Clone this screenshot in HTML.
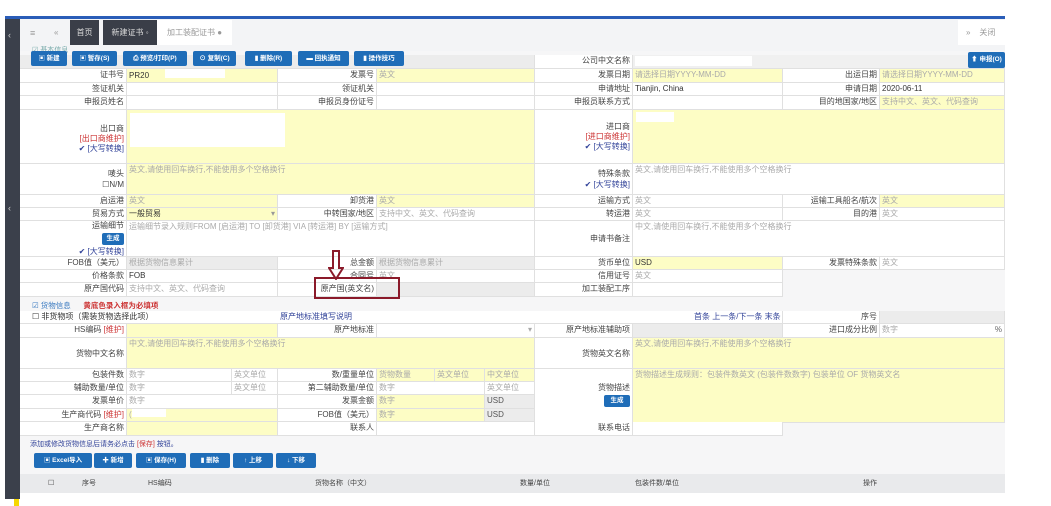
<!DOCTYPE html>
<html><head><meta charset="utf-8"><style>
*{margin:0;padding:0;box-sizing:border-box}
body{width:1051px;height:506px;background:#fff;position:relative;overflow:hidden;font-family:"Liberation Sans","Noto Sans CJK SC",sans-serif;font-size:8px;color:#333}
div{position:absolute}
.c{border-right:1px solid #e0e0e0;border-bottom:1px solid #e0e0e0;line-height:12px;padding:0 2px;white-space:nowrap;overflow:hidden}
.l{background:#fff;text-align:right;color:#444}
.y{background:#fdfdc5;color:#aaa}
.w{background:#fff;color:#aaa}
.g{background:#ececec;color:#aaa}
.k{color:#333}
.b{background:#1f6db8;color:#fff;border-radius:2px;font-size:6.5px;line-height:15px;height:15px;text-align:center;font-weight:bold}
.r{color:#c33}.u{color:#33449a}
</style></head><body>
<div style="left:5px;top:16px;width:1000px;height:3px;background:#2a5db8"></div>
<div style="left:5px;top:19px;width:15px;height:480px;background:#3b404b"></div>
<div style="left:8px;top:30px;color:#ccc;font-size:9px">‹</div>
<div style="left:8px;top:203px;color:#ccc;font-size:9px">‹</div>
<div style="left:20px;top:19px;width:985px;height:32px;background:#f3f4f6"></div>
<div style="left:30px;top:28px;color:#999;font-size:9px">≡</div>
<div style="left:54px;top:28px;color:#999;font-size:8px">«</div>
<div style="left:70px;top:20px;width:29px;height:25px;background:#3a3e48;color:#ddd;line-height:25px;text-align:center">首页</div>
<div style="left:103px;top:20px;width:54px;height:25px;background:#3a3e48;color:#ddd;line-height:25px;text-align:center">新建证书 ◦</div>
<div style="left:157px;top:20px;width:75px;height:25px;background:#fff;color:#999;line-height:25px;text-align:center">加工装配证书 ●</div>
<div style="left:958px;top:20px;width:47px;height:25px;background:#fff;color:#999;line-height:25px;padding-left:8px">»&nbsp;&nbsp;&nbsp; 关闭</div>
<div style="left:20px;top:51px;width:985px;height:448px;background:#f6f6f7"></div>
<div style="left:32px;top:45px;color:#7aa;font-size:7px">☑ 基本信息</div>
<!-- row0 -->
<div class="c g" style="left:20px;top:55px;width:515px;height:14px"></div>
<div class="c l" style="left:535px;top:55px;width:98px;height:14px">公司中文名称</div>
<div class="c w" style="left:633px;top:55px;width:372px;height:14px;background:#f0f0f0"><span style="display:inline-block;width:117px;height:10px;background:#fff;margin-top:1px"></span></div>
<div class="b" style="left:31px;top:51px;width:36px">▣ 新建</div>
<div class="b" style="left:72px;top:51px;width:45px">▣ 暂存(S)</div>
<div class="b" style="left:123px;top:51px;width:64px">⎙ 预览/打印(P)</div>
<div class="b" style="left:193px;top:51px;width:43px">⊙ 复制(C)</div>
<div class="b" style="left:245px;top:51px;width:47px">▮ 删除(R)</div>
<div class="b" style="left:298px;top:51px;width:51px">▬ 回执通知</div>
<div class="b" style="left:354px;top:51px;width:50px">▮ 操作技巧</div>
<div class="b" style="left:968px;top:52px;width:37px;height:16px">⬆ 申报(O)</div>
<!-- R1 -->
<div class="c l" style="left:20px;top:69px;width:107px;height:14px">证书号</div>
<div class="c y" style="left:127px;top:69px;width:151px;height:14px;color:#333">PR20<span style="display:inline-block;width:60px;height:9px;background:#fff;margin-left:16px"></span></div>
<div class="c l" style="left:278px;top:69px;width:99px;height:14px">发票号</div>
<div class="c y" style="left:377px;top:69px;width:158px;height:14px">英文</div>
<div class="c l" style="left:535px;top:69px;width:98px;height:14px">发票日期</div>
<div class="c y" style="left:633px;top:69px;width:150px;height:14px">请选择日期YYYY-MM-DD</div>
<div class="c l" style="left:783px;top:69px;width:97px;height:14px">出运日期</div>
<div class="c y" style="left:880px;top:69px;width:125px;height:14px">请选择日期YYYY-MM-DD</div>
<!-- R2 -->
<div class="c l" style="left:20px;top:83px;width:107px;height:13px">签证机关</div>
<div class="c w" style="left:127px;top:83px;width:151px;height:13px"></div>
<div class="c l" style="left:278px;top:83px;width:99px;height:13px">领证机关</div>
<div class="c w" style="left:377px;top:83px;width:158px;height:13px"></div>
<div class="c l" style="left:535px;top:83px;width:98px;height:13px">申请地址</div>
<div class="c w k" style="left:633px;top:83px;width:150px;height:13px">Tianjin, China</div>
<div class="c l" style="left:783px;top:83px;width:97px;height:13px">申请日期</div>
<div class="c w k" style="left:880px;top:83px;width:125px;height:13px">2020-06-11</div>
<!-- R3 -->
<div class="c l" style="left:20px;top:96px;width:107px;height:14px">申报员姓名</div>
<div class="c w" style="left:127px;top:96px;width:151px;height:14px"></div>
<div class="c l" style="left:278px;top:96px;width:99px;height:14px">申报员身份证号</div>
<div class="c w" style="left:377px;top:96px;width:158px;height:14px"></div>
<div class="c l" style="left:535px;top:96px;width:98px;height:14px">申报员联系方式</div>
<div class="c w" style="left:633px;top:96px;width:150px;height:14px"></div>
<div class="c l" style="left:783px;top:96px;width:97px;height:14px">目的地国家/地区</div>
<div class="c y" style="left:880px;top:96px;width:125px;height:14px">支持中文、英文、代码查询</div>
<!-- R4 -->
<div class="c l" style="left:20px;top:110px;width:107px;height:54px;line-height:10px;padding-top:14px">出口商<br><span class="r">[出口商维护]</span><br><span class="u">✔ [大写转换]</span></div>
<div class="c y" style="left:127px;top:110px;width:408px;height:54px"><div style="left:3px;top:3px;width:155px;height:34px;background:#fff"></div></div>
<div class="c l" style="left:535px;top:110px;width:98px;height:54px;line-height:10px;padding-top:12px">进口商<br><span class="r">[进口商维护]</span><br><span class="u">✔ [大写转换]</span></div>
<div class="c y" style="left:633px;top:110px;width:372px;height:54px"><div style="left:3px;top:2px;width:38px;height:10px;background:#fff"></div></div>
<!-- R5 -->
<div class="c l" style="left:20px;top:164px;width:107px;height:31px;line-height:11px;padding-top:4px">唛头<br>☐N/M</div>
<div class="c y" style="left:127px;top:164px;width:408px;height:31px">英文,请使用回车换行,不能使用多个空格换行</div>
<div class="c l" style="left:535px;top:164px;width:98px;height:31px;line-height:11px;padding-top:4px">特殊条款<br><span class="u">✔ [大写转换]</span></div>
<div class="c w" style="left:633px;top:164px;width:372px;height:31px">英文,请使用回车换行,不能使用多个空格换行</div>
<!-- R6 -->
<div class="c l" style="left:20px;top:195px;width:107px;height:13px">启运港</div>
<div class="c y" style="left:127px;top:195px;width:151px;height:13px">英文</div>
<div class="c l" style="left:278px;top:195px;width:99px;height:13px">卸货港</div>
<div class="c y" style="left:377px;top:195px;width:158px;height:13px">英文</div>
<div class="c l" style="left:535px;top:195px;width:98px;height:13px">运输方式</div>
<div class="c w" style="left:633px;top:195px;width:150px;height:13px">英文</div>
<div class="c l" style="left:783px;top:195px;width:97px;height:13px">运输工具船名/航次</div>
<div class="c y" style="left:880px;top:195px;width:125px;height:13px">英文</div>
<!-- R7 -->
<div class="c l" style="left:20px;top:208px;width:107px;height:13px">贸易方式</div>
<div class="c y k" style="left:127px;top:208px;width:151px;height:13px">一般贸易<span style="float:right;color:#999">▾</span></div>
<div class="c l" style="left:278px;top:208px;width:99px;height:13px">中转国家/地区</div>
<div class="c w" style="left:377px;top:208px;width:158px;height:13px">支持中文、英文、代码查询</div>
<div class="c l" style="left:535px;top:208px;width:98px;height:13px">转运港</div>
<div class="c w" style="left:633px;top:208px;width:150px;height:13px">英文</div>
<div class="c l" style="left:783px;top:208px;width:97px;height:13px">目的港</div>
<div class="c w" style="left:880px;top:208px;width:125px;height:13px">英文</div>
<!-- R8 -->
<div class="c l" style="left:20px;top:221px;width:107px;height:36px;line-height:10px">运输细节<br><span class="b" style="position:relative;display:inline-block;width:22px;height:12px;line-height:12px;margin:2px 0">生成</span><br><span class="u">✔ [大写转换]</span></div>
<div class="c w" style="left:127px;top:221px;width:408px;height:36px">运输细节录入规则FROM [启运港] TO [卸货港] VIA [转运港] BY [运输方式]</div>
<div class="c l" style="left:535px;top:221px;width:98px;height:36px;line-height:36px">申请书备注</div>
<div class="c w" style="left:633px;top:221px;width:372px;height:36px">中文,请使用回车换行,不能使用多个空格换行</div>
<!-- R9 -->
<div class="c l" style="left:20px;top:257px;width:107px;height:13px">FOB值（美元）</div>
<div class="c g" style="left:127px;top:257px;width:151px;height:13px">根据货物信息累计</div>
<div class="c l" style="left:278px;top:257px;width:99px;height:13px">总金额</div>
<div class="c g" style="left:377px;top:257px;width:158px;height:13px">根据货物信息累计</div>
<div class="c l" style="left:535px;top:257px;width:98px;height:13px">货币单位</div>
<div class="c y k" style="left:633px;top:257px;width:150px;height:13px">USD</div>
<div class="c l" style="left:783px;top:257px;width:97px;height:13px">发票特殊条款</div>
<div class="c w" style="left:880px;top:257px;width:125px;height:13px">英文</div>
<!-- R10 -->
<div class="c l" style="left:20px;top:270px;width:107px;height:13px">价格条款</div>
<div class="c w k" style="left:127px;top:270px;width:151px;height:13px">FOB</div>
<div class="c l" style="left:278px;top:270px;width:99px;height:13px">合同号</div>
<div class="c w" style="left:377px;top:270px;width:158px;height:13px">英文</div>
<div class="c l" style="left:535px;top:270px;width:98px;height:13px">信用证号</div>
<div class="c w" style="left:633px;top:270px;width:150px;height:13px">英文</div>
<!-- R11 -->
<div class="c l" style="left:20px;top:283px;width:107px;height:14px">原产国代码</div>
<div class="c w" style="left:127px;top:283px;width:151px;height:14px">支持中文、英文、代码查询</div>
<div class="c l" style="left:278px;top:283px;width:99px;height:14px">原产国(英文名)</div>
<div class="c g" style="left:377px;top:283px;width:158px;height:14px"></div>
<div class="c l" style="left:535px;top:283px;width:98px;height:14px">加工装配工序</div>
<div class="c w" style="left:633px;top:283px;width:150px;height:14px"></div>
<div style="left:314px;top:277px;width:86px;height:22px;border:2px solid #8b1a2a"></div>
<svg style="position:absolute;left:328px;top:250px" width="16" height="30" viewBox="0 0 16 30"><path d="M5 1 H11 V18 H15 L8 29 L1 18 H5 Z" fill="none" stroke="#8b1a2a" stroke-width="2"/></svg>
<!-- header -->
<div style="left:32px;top:300px;font-size:7.5px"><span style="color:#3a7ac0">☑ 货物信息</span>&nbsp;&nbsp;&nbsp;&nbsp;&nbsp;&nbsp;<span class="r" style="font-weight:bold">黄底色录入框为必填项</span></div>
<!-- R12 -->
<div class="c w k" style="left:20px;top:311px;width:763px;height:13px;padding-left:12px">☐ 非货物项（需装货物选择此项）<span class="u" style="position:absolute;left:260px">原产地标准填写说明</span><span class="u" style="position:absolute;left:674px">首条 上一条/下一条 末条</span></div>
<div class="c l" style="left:783px;top:311px;width:97px;height:13px">序号</div>
<div class="c g" style="left:880px;top:311px;width:125px;height:13px"></div>
<!-- R13 -->
<div class="c l" style="left:20px;top:324px;width:107px;height:14px">HS编码 <span class="r">[维护]</span></div>
<div class="c y" style="left:127px;top:324px;width:151px;height:14px"></div>
<div class="c l" style="left:278px;top:324px;width:99px;height:14px">原产地标准</div>
<div class="c w" style="left:377px;top:324px;width:158px;height:14px"><span style="float:right">▾</span></div>
<div class="c l" style="left:535px;top:324px;width:98px;height:14px">原产地标准辅助项</div>
<div class="c g" style="left:633px;top:324px;width:150px;height:14px"></div>
<div class="c l" style="left:783px;top:324px;width:97px;height:14px">进口成分比例</div>
<div class="c w" style="left:880px;top:324px;width:125px;height:14px">数字<span style="float:right;color:#666">%</span></div>
<!-- R14 -->
<div class="c l" style="left:20px;top:338px;width:107px;height:31px;line-height:31px">货物中文名称</div>
<div class="c y" style="left:127px;top:338px;width:408px;height:31px">中文,请使用回车换行,不能使用多个空格换行</div>
<div class="c l" style="left:535px;top:338px;width:98px;height:31px;line-height:31px">货物英文名称</div>
<div class="c y" style="left:633px;top:338px;width:372px;height:31px">英文,请使用回车换行,不能使用多个空格换行</div>
<!-- R15-19 -->
<div class="c l" style="left:20px;top:369px;width:107px;height:13px">包装件数</div>
<div class="c w" style="left:127px;top:369px;width:105px;height:13px">数字</div>
<div class="c w" style="left:232px;top:369px;width:46px;height:13px">英文单位</div>
<div class="c l" style="left:278px;top:369px;width:99px;height:13px">数/重量单位</div>
<div class="c y" style="left:377px;top:369px;width:58px;height:13px">货物数量</div>
<div class="c y" style="left:435px;top:369px;width:50px;height:13px">英文单位</div>
<div class="c y" style="left:485px;top:369px;width:50px;height:13px">中文单位</div>
<div class="c l" style="left:535px;top:369px;width:98px;height:54px;line-height:10px;padding-top:14px">货物描述<br><span class="b" style="position:relative;display:inline-block;width:26px;height:12px;line-height:12px;margin-top:2px">生成</span></div>
<div class="c y" style="left:633px;top:369px;width:372px;height:54px">货物描述生成规则：包装件数英文 (包装件数数字) 包装单位 OF 货物英文名</div>
<div class="c l" style="left:20px;top:382px;width:107px;height:13px">辅助数量/单位</div>
<div class="c w" style="left:127px;top:382px;width:105px;height:13px">数字</div>
<div class="c w" style="left:232px;top:382px;width:46px;height:13px">英文单位</div>
<div class="c l" style="left:278px;top:382px;width:99px;height:13px">第二辅助数量/单位</div>
<div class="c w" style="left:377px;top:382px;width:108px;height:13px">数字</div>
<div class="c w" style="left:485px;top:382px;width:50px;height:13px">英文单位</div>
<div class="c l" style="left:20px;top:395px;width:107px;height:14px">发票单价</div>
<div class="c w" style="left:127px;top:395px;width:151px;height:14px">数字</div>
<div class="c l" style="left:278px;top:395px;width:99px;height:14px">发票金额</div>
<div class="c y" style="left:377px;top:395px;width:108px;height:14px">数字</div>
<div class="c g" style="left:485px;top:395px;width:50px;height:14px;color:#555">USD</div>
<div class="c l" style="left:20px;top:409px;width:107px;height:13px">生产商代码 <span class="r">[维护]</span></div>
<div class="c y" style="left:127px;top:409px;width:151px;height:13px">(<span style="display:inline-block;width:34px;height:8px;background:#fff"></span></div>
<div class="c l" style="left:278px;top:409px;width:99px;height:13px">FOB值（美元）</div>
<div class="c y" style="left:377px;top:409px;width:108px;height:13px">数字</div>
<div class="c g" style="left:485px;top:409px;width:50px;height:13px;color:#555">USD</div>
<div class="c l" style="left:20px;top:422px;width:107px;height:14px">生产商名称</div>
<div class="c y" style="left:127px;top:422px;width:151px;height:14px"></div>
<div class="c l" style="left:278px;top:422px;width:99px;height:14px">联系人</div>
<div class="c w" style="left:377px;top:422px;width:158px;height:14px"></div>
<div class="c l" style="left:535px;top:422px;width:98px;height:14px">联系电话</div>
<div class="c w" style="left:633px;top:422px;width:150px;height:14px"></div>
<div style="left:30px;top:439px;color:#33449a;font-size:7px">添加或修改货物信息后请务必点击 <span class="r">[保存]</span> 按钮。</div>
<div class="b" style="left:34px;top:453px;width:58px">▣ Excel导入</div>
<div class="b" style="left:94px;top:453px;width:38px">✚ 新增</div>
<div class="b" style="left:136px;top:453px;width:50px">▣ 保存(H)</div>
<div class="b" style="left:190px;top:453px;width:40px">▮ 删除</div>
<div class="b" style="left:233px;top:453px;width:40px">↑ 上移</div>
<div class="b" style="left:276px;top:453px;width:40px">↓ 下移</div>
<div style="left:20px;top:474px;width:985px;height:19px;background:#e9eaec;line-height:19px;font-size:7px;color:#444">
<span style="position:absolute;left:28px">☐</span><span style="position:absolute;left:62px">序号</span><span style="position:absolute;left:128px">HS编码</span><span style="position:absolute;left:295px">货物名称（中文）</span><span style="position:absolute;left:500px">数量/单位</span><span style="position:absolute;left:615px">包装件数/单位</span><span style="position:absolute;left:843px">操作</span></div>
<div style="left:20px;top:493px;width:985px;height:6px;background:#fff"></div>
<div style="left:14px;top:499px;width:5px;height:7px;background:#f5d800"></div>
</body></html>
